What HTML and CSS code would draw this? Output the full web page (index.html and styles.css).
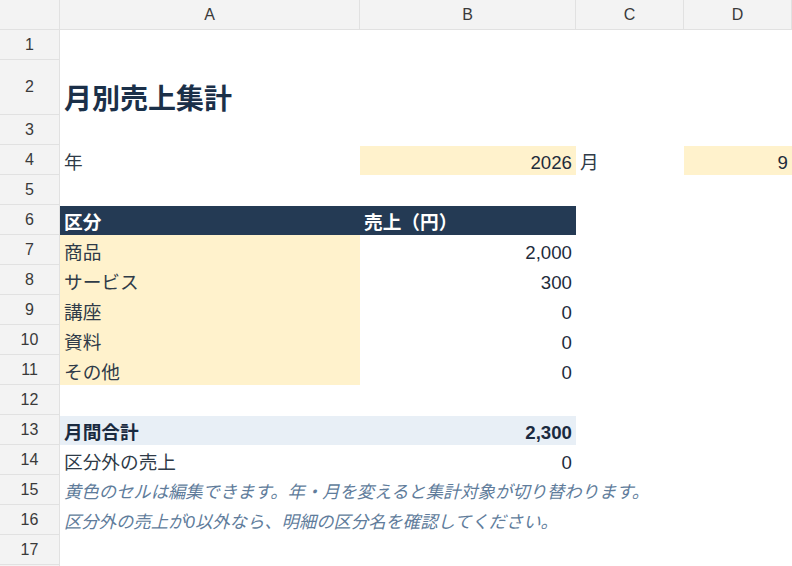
FILE: index.html
```html
<!DOCTYPE html>
<html lang="ja">
<head>
<meta charset="utf-8">
<title>月別売上集計</title>
<link rel="stylesheet" href="styles.css">
</head>
<body>
<div class="sheet">
  <div class="corner"></div>
  <div class="colhead">A</div>
  <div class="colhead">B</div>
  <div class="colhead">C</div>
  <div class="colhead">D</div>

  <div class="rowhead">1</div>
  <div class="cell"></div><div class="cell"></div><div class="cell"></div><div class="cell"></div>

  <div class="rowhead">2</div>
  <div class="cell title">月別売上集計</div><div class="cell"></div><div class="cell"></div><div class="cell"></div>

  <div class="rowhead">3</div>
  <div class="cell"></div><div class="cell"></div><div class="cell"></div><div class="cell"></div>

  <div class="rowhead">4</div>
  <div class="cell">年</div><div class="cell input gap num">2026</div><div class="cell">月</div><div class="cell input gap num">9</div>

  <div class="rowhead">5</div>
  <div class="cell"></div><div class="cell"></div><div class="cell"></div><div class="cell"></div>

  <div class="rowhead">6</div>
  <div class="cell th gap">区分</div><div class="cell th gap">売上（円）</div><div class="cell"></div><div class="cell"></div>

  <div class="rowhead">7</div>
  <div class="cell input">商品</div><div class="cell num">2,000</div><div class="cell"></div><div class="cell"></div>

  <div class="rowhead">8</div>
  <div class="cell input">サービス</div><div class="cell num">300</div><div class="cell"></div><div class="cell"></div>

  <div class="rowhead">9</div>
  <div class="cell input">講座</div><div class="cell num">0</div><div class="cell"></div><div class="cell"></div>

  <div class="rowhead">10</div>
  <div class="cell input">資料</div><div class="cell num">0</div><div class="cell"></div><div class="cell"></div>

  <div class="rowhead">11</div>
  <div class="cell input">その他</div><div class="cell num">0</div><div class="cell"></div><div class="cell"></div>

  <div class="rowhead">12</div>
  <div class="cell"></div><div class="cell"></div><div class="cell"></div><div class="cell"></div>

  <div class="rowhead">13</div>
  <div class="cell total gap">月間合計</div><div class="cell total gap num">2,300</div><div class="cell"></div><div class="cell"></div>

  <div class="rowhead">14</div>
  <div class="cell">区分外の売上</div><div class="cell num">0</div><div class="cell"></div><div class="cell"></div>

  <div class="rowhead">15</div>
  <div class="cell note">黄色のセルは編集できます。年・月を変えると集計対象が切り替わります。</div><div class="cell"></div><div class="cell"></div><div class="cell"></div>

  <div class="rowhead">16</div>
  <div class="cell note">区分外の売上が0以外なら、明細の区分名を確認してください。</div><div class="cell"></div><div class="cell"></div><div class="cell"></div>

  <div class="rowhead">17</div>
  <div class="cell"></div><div class="cell"></div><div class="cell"></div><div class="cell"></div>

  <div class="rowhead"></div>
  <div class="cell"></div><div class="cell"></div><div class="cell"></div><div class="cell"></div>
</div>
</body>
</html>
```

FILE: styles.css
```css
html, body {
  margin: 0;
  padding: 0;
  background: #ffffff;
  overflow: hidden;
}

body {
  font-family: "Liberation Sans", "Noto Sans CJK JP", sans-serif;
  color: #2f3b48;
}

.sheet {
  display: grid;
  grid-template-columns: 60px 300px 216px 108px 108px;
  grid-template-rows: 30px 30px 55px repeat(16, 30px);
  width: 792px;
}

.corner,
.colhead,
.rowhead {
  background: #f3f3f3;
  box-sizing: border-box;
  color: #3a3a3a;
  font-size: 16px;
  display: flex;
  align-items: center;
  justify-content: center;
  border-right: 1px solid #e1e1e1;
  border-bottom: 1px solid #e1e1e1;
}

.cell {
  box-sizing: border-box;
  padding: 0 4px 2px;
  font-size: 18.67px;
  line-height: 1;
  display: flex;
  align-items: flex-end;
  white-space: nowrap;
  min-width: 0;
}

.gap {
  border-top: 1px solid #ffffff;
  background-clip: padding-box;
}

.num {
  justify-content: flex-end;
  color: #1e2b3b;
}

.input {
  background-color: #fff2cc;
}

.title {
  font-size: 28px;
  font-weight: bold;
  color: #1b3049;
  padding-bottom: 1px;
}

.th {
  background-color: #243a54;
  color: #ffffff;
  font-weight: bold;
}

.total {
  background-color: #e8eff6;
  font-weight: bold;
  color: #1a2a40;
}

.note {
  font-size: 17.33px;
  font-style: italic;
  color: #607c9b;
  padding-bottom: 4px;
}
```
